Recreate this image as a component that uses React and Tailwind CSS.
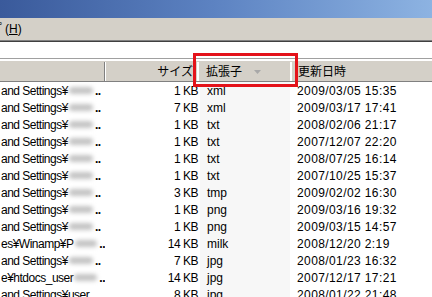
import React from 'react';

const ROWS = [
  { pre: 'and Settings¥', size: '1 KB', ext: 'xml', date: '2009/03/05 15:35' },
  { pre: 'and Settings¥', size: '7 KB', ext: 'xml', date: '2009/03/17 17:41' },
  { pre: 'and Settings¥', size: '1 KB', ext: 'txt', date: '2008/02/06 21:17' },
  { pre: 'and Settings¥', size: '1 KB', ext: 'txt', date: '2007/12/07 22:20' },
  { pre: 'and Settings¥', size: '1 KB', ext: 'txt', date: '2008/07/25 16:14' },
  { pre: 'and Settings¥', size: '1 KB', ext: 'txt', date: '2007/10/25 15:37' },
  { pre: 'and Settings¥', size: '3 KB', ext: 'tmp', date: '2009/02/02 16:30' },
  { pre: 'and Settings¥', size: '1 KB', ext: 'png', date: '2009/03/16 19:32' },
  { pre: 'and Settings¥', size: '1 KB', ext: 'png', date: '2009/03/15 14:57' },
  { pre: 'es¥Winamp¥P', size: '14 KB', ext: 'milk', date: '2008/12/20 2:19' },
  { pre: 'and Settings¥', size: '7 KB', ext: 'jpg', date: '2008/01/23 16:32' },
  { pre: 'e¥htdocs_user', size: '14 KB', ext: 'jpg', date: '2007/12/17 17:21' },
  { pre: 'and Settings¥user', size: '8 KB', ext: 'jpg', date: '2008/01/22 21:48', last: true },
];

const FONT = { fontFamily: '"Liberation Sans", "Noto Sans CJK JP", sans-serif' };

function Row({ r }) {
  return (
    <div className="flex h-[17px] flex-shrink-0 items-center text-[12px] text-black leading-none">
      <div className="w-[105px] flex-shrink-0 self-stretch flex items-center overflow-hidden whitespace-nowrap tracking-[-0.5px] pl-[1px]">
        <span>{r.pre}</span>
        {!r.last && (
          <>
            <span className="inline-block w-[24px] h-[7px] ml-[1px] bg-[#c4c4c4] blur-[2px] rounded-full" />
            <span className="ml-[2px] font-bold">..</span>
          </>
        )}
      </div>
      <div className="w-[95px] flex-shrink-0 text-right pr-[2px] tracking-[-0.5px]">{r.size}</div>
      <div className="w-[90px] flex-shrink-0 self-stretch flex items-center bg-[#f7f7f7] pl-[7px]">{r.ext}</div>
      <div className="flex-1 pl-[7px] tracking-[0.4px] whitespace-nowrap">{r.date}</div>
    </div>
  );
}

export default function App() {
  return (
    <div className="relative w-[432px] h-[297px] overflow-hidden bg-white" style={FONT}>
      {/* タイトルバー */}
      <div className="h-[18px] bg-gradient-to-r from-[#3a5a9b] via-[#5d83c2] to-[#8db3e2]" />

      {/* メニューバー */}
      <div className="h-[22px] bg-[#d4d0c8] flex items-center text-[12px] text-black">
        <span className="-ml-[1px]">ﾟ(<span className="underline">H</span>)</span>
      </div>
      <div className="h-[1px] bg-[#808080]" />
      <div className="h-[1px] bg-[#404040]" />

      {/* アドレス欄 */}
      <div className="h-[16px] bg-white" />
      <div className="h-[1px] bg-[#a0a0a0]" />
      <div className="h-[2px] bg-white" />
      <div className="h-[1px] bg-[#d4d0c8]" />

      {/* ヘッダー */}
      <div className="flex h-[20px] bg-[#d4d0c8] text-[12px] text-black leading-none border-b border-[#808080]">
        <div className="w-[105px] flex-shrink-0 border-r border-[#808080]" />
        <div className="w-[93px] flex-shrink-0 border-l border-white border-r border-[#808080] flex items-center justify-end pr-[4px]">
          サイズ
        </div>
        <div className="w-[93px] flex-shrink-0 border-l border-white border-r border-[#808080] flex items-center pl-[7px]">
          <span>拡張子</span>
          <svg className="ml-[12px]" width="7" height="4" viewBox="0 0 7 4">
            <path d="M0 0h7L3.5 4z" fill="#a8a8a8" />
          </svg>
        </div>
        <div className="flex-1 border-l border-white flex items-center pl-[6px]">更新日時</div>
      </div>

      {/* 一覧 */}
      <div className="flex flex-col">
        {ROWS.map((r, i) => (
          <Row key={i} r={r} />
        ))}
      </div>

      {/* 強調枠 */}
      <div className="absolute left-[193px] top-[53px] w-[105px] h-[34px] border-[3px] border-[#e4121a]" />
    </div>
  );
}
